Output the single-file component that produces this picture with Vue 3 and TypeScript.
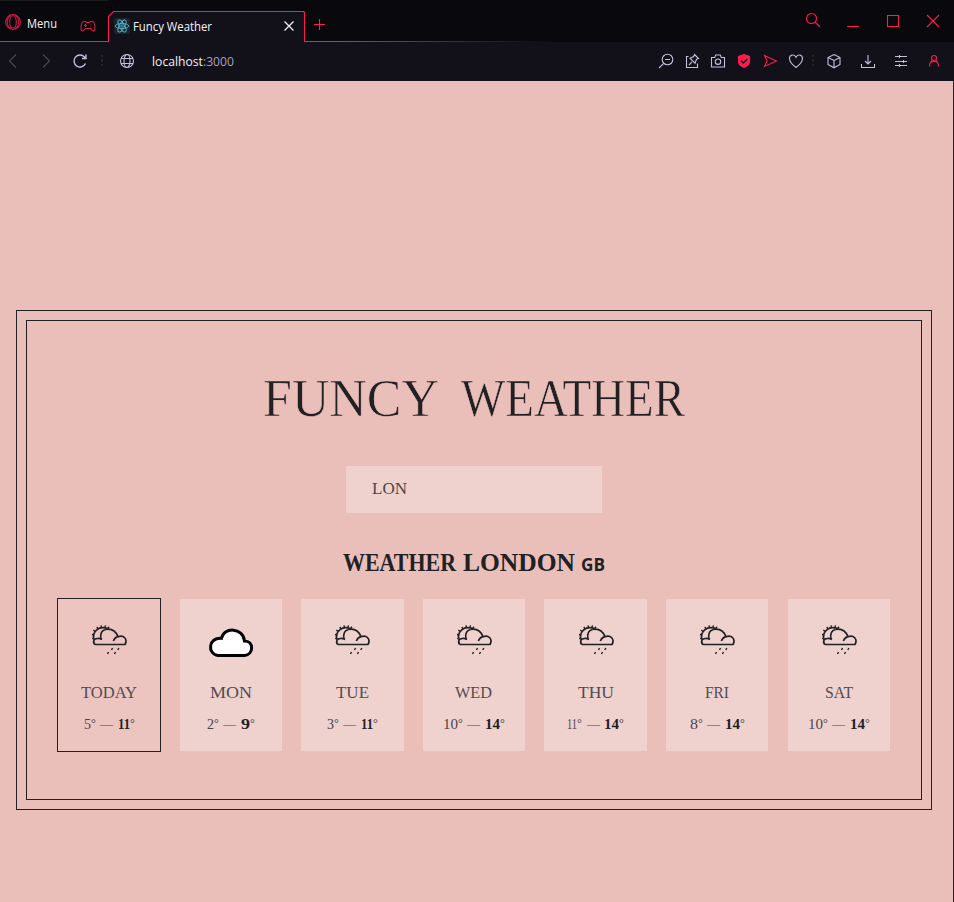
<script setup lang="ts">
import { ref } from 'vue'

interface Day {
  name: string
  nameWidth: number
  sky: 'rain' | 'cloud'
  low: number
  lowWidth: number
  high: number
  highWidth: number
}

const query = ref('LON')

const days: Day[] = [
  { name: 'TODAY', nameWidth: 56, sky: 'rain', low: 5, lowWidth: 7, high: 11, highWidth: 12 },
  { name: 'MON', nameWidth: 42, sky: 'cloud', low: 2, lowWidth: 7, high: 9, highWidth: 9 },
  { name: 'TUE', nameWidth: 33, sky: 'rain', low: 3, lowWidth: 7, high: 11, highWidth: 12 },
  { name: 'WED', nameWidth: 37, sky: 'rain', low: 10, lowWidth: 15, high: 14, highWidth: 15 },
  { name: 'THU', nameWidth: 36, sky: 'rain', low: 11, lowWidth: 10, high: 14, highWidth: 15 },
  { name: 'FRI', nameWidth: 24, sky: 'rain', low: 8, lowWidth: 8, high: 14, highWidth: 15 },
  { name: 'SAT', nameWidth: 28, sky: 'rain', low: 10, lowWidth: 15, high: 14, highWidth: 15 },
]
</script>

<template>
  <div class="window">
    <header class="titlebar">
      <div class="menu">
        <svg class="opera" width="16" height="16" viewBox="0 0 16 16">
          <circle cx="8" cy="8" r="7.4" />
          <ellipse cx="8" cy="8" rx="3.3" ry="6.2" />
          <path d="M6 1.5C1 4 1 12 6 14.5M10 1.5C15 4 15 12 10 14.5" />
        </svg>
        <svg class="menu-label" width="31" height="20">
          <text x="0" y="15" textLength="30" lengthAdjust="spacingAndGlyphs">Menu</text>
        </svg>
        <svg class="pad" width="16" height="14" viewBox="0 0 16 14">
          <path d="M3.500 1.500h2l1 1h3l1-1h2c2 0 2.400 4.500 2.400 7.700 0 2-2 2.200-3 .8L10.500 8.500h-5L4 10c-1 1.400-3 1.200-3-.8 0-3.200.5-7.700 2.500-7.700z" />
          <path d="M4 5.500h3M5.500 4v3M11 4.500v.8M11 6.500v.8" />
        </svg>
      </div>
      <div class="tab">
        <svg class="tab-edge" width="197" height="31" viewBox="0 0 197 31">
          <path d="M.5 31V5.500L5.500.5H195.500L196.500 1.500V31" />
        </svg>
        <svg class="react" width="16" height="16" viewBox="0 0 16 16">
          <rect width="16" height="16" rx="2" />
          <ellipse cx="8" cy="8" rx="6.7" ry="2.600" />
          <ellipse cx="8" cy="8" rx="6.7" ry="2.600" transform="rotate(60 8 8)" />
          <ellipse cx="8" cy="8" rx="6.7" ry="2.600" transform="rotate(120 8 8)" />
          <circle cx="8" cy="8" r="1.200" />
        </svg>
        <svg class="tab-title" width="80" height="20">
          <text x="0" y="15" textLength="79" lengthAdjust="spacingAndGlyphs">Funcy Weather</text>
        </svg>
        <svg class="tab-close" width="10" height="10" viewBox="0 0 10 10"><path d="M.5.5l9 9M9.500.5l-9 9" /></svg>
      </div>
      <div class="strip">
        <svg width="12" height="12" viewBox="0 0 12 12"><path d="M5.500 0v11M0 5.500h11" /></svg>
      </div>
      <div class="controls">
        <svg width="16" height="16" viewBox="0 0 16 16"><circle cx="6.500" cy="6.500" r="5" /><path d="M10 10l5 5" /></svg>
        <svg width="14" height="16" viewBox="0 0 14 16"><path d="M1 14.500h12" /></svg>
        <svg width="14" height="16" viewBox="0 0 14 16"><path d="M1.500 3.500h11v11h-11z" /></svg>
        <svg width="14" height="16" viewBox="0 0 14 16"><path d="M1 3l12 12M13 3L1 15" /></svg>
      </div>
    </header>

    <nav class="toolbar">
      <div class="history">
        <svg class="dim" width="16" height="16" viewBox="0 0 16 16"><path d="M11 1.500L4.500 8l6.500 6.500" /></svg>
        <svg class="dim" width="16" height="16" viewBox="0 0 16 16"><path d="M5 1.500L11.500 8 5 14.500" /></svg>
        <svg class="reload" width="16" height="16" viewBox="0 0 16 16"><path d="M13.500 10.500A6 6 0 1 1 12.500 4L14 5.500M14 1.500v4H10" /></svg>
      </div>
      <span class="dots"></span>
      <svg class="globe" width="16" height="16" viewBox="0 0 16 16">
        <circle cx="8" cy="8" r="6.500" /><ellipse cx="8" cy="8" rx="3" ry="6.500" /><path d="M2 5.500h12M2 10.500h12" />
      </svg>
      <svg class="address" width="84" height="20">
        <text x="0" y="15" textLength="82" lengthAdjust="spacingAndGlyphs">localhost<tspan class="port">:3000</tspan></text>
      </svg>
      <div class="tools">
        <svg width="16" height="16" viewBox="0 0 16 16"><circle cx="9.500" cy="6.500" r="5.300" /><path d="M5.700 10.300L1 15M7 6.500h5" /></svg>
        <svg width="16" height="16" viewBox="0 0 16 16"><path d="M4.500 3.500h-2v11h11V10.500M5 12l3-3.200M10.500 1.500l4 4-2 .7-1.500 4-5-5 3.700-1.700z" /></svg>
        <svg width="16" height="16" viewBox="0 0 16 16"><path d="M1.500 4.500h3.200l1-2.500h4.600l1 2.500h3.200v9.500h-13z" /><circle cx="8" cy="8.700" r="2.700" /></svg>
        <svg class="shield" width="16" height="16" viewBox="0 0 16 16"><path d="M8 1.500l5.500 1.800v5.200c0 3-2.300 4.800-5.500 6-3.200-1.200-5.500-3-5.500-6V3.300z" /><path class="tick" d="M5 7.700l2.300 2.300L11.300 6" /></svg>
        <svg class="accent" width="16" height="16" viewBox="0 0 16 16"><path d="M2.500 2.500L14.500 8l-12 5.500L5 8z" /></svg>
        <svg width="16" height="16" viewBox="0 0 16 16"><path d="M8 14.500C4 11.500 1.500 8.700 1.500 5.500 1.500 1.500 6.500.8 8 4.200 9.500.8 14.500 1.500 14.500 5.500c0 3.200-2.500 6-6.500 9z" /></svg>
      </div>
      <span class="dots"></span>
      <div class="panels">
        <svg width="16" height="16" viewBox="0 0 16 16"><path d="M8 1.500l6 3v7l-6 3.300-6-3.300v-7zM2 4.500l6 3 6-3M8 7.500v7" /></svg>
        <svg width="16" height="16" viewBox="0 0 16 16"><path d="M8 2v8.500M5 8l3 3 3-3M1.500 11v3.500h13V11" /></svg>
        <svg width="16" height="16" viewBox="0 0 16 16"><path d="M2 3.500h12M2 8.500h12M2 12.500h12M6.500 2v3M10.500 7v3M6.500 11v3" /></svg>
        <svg class="accent" width="16" height="16" viewBox="0 0 16 16"><circle cx="8" cy="5" r="2.500" /><path d="M3.500 13.500v-1c0-2.500 2-4 4.500-4s4.500 1.500 4.500 4v1M6 7.500L4.500 9M10 7.500L11.500 9" /></svg>
      </div>
    </nav>

    <main class="page">
      <section class="frame">
        <div class="panel">
          <h1 class="title">
            <svg width="424" height="70">
              <text x="1" y="50" textLength="176" lengthAdjust="spacingAndGlyphs">FUNCY</text>
              <text x="199" y="50" textLength="224" lengthAdjust="spacingAndGlyphs">WEATHER</text>
            </svg>
          </h1>

          <input v-model="query" class="search" type="text" />

          <h2 class="place">
            <svg width="264" height="40">
              <text x="1" y="31" textLength="113" lengthAdjust="spacingAndGlyphs">WEATHER</text>
              <text x="121" y="31" textLength="112" lengthAdjust="spacingAndGlyphs">LONDON</text>
              <text class="country" x="239" y="31" textLength="24" lengthAdjust="spacingAndGlyphs">GB</text>
            </svg>
          </h2>

          <div class="days">
            <article v-for="(day, i) in days" :key="day.name" class="day" :class="{ today: i === 0 }">
              <div class="sky">
                <svg v-if="day.sky === 'rain'" class="rain" width="35" height="31" viewBox="0 0 35 31">
                  <path class="rays" d="M.2 13.500H2M0 9.500L2 10M1.300 5.200L3.300 6.500M4.800 2L6 3.800M9 .3L9.400 2.300M13.500.3L13 2.400M17 1.800L15.700 3.500" />
                  <path d="M2 14.500C-.3 6.500 7 .3 16 3.800M13.500 4.500C9.500 5.500 8 9 9 14" />
                  <path d="M3 19.500H33C36 14 31.500 9.500 26 11.700 23.500 5.500 18.500 3.500 13.500 4.500M10 14.500C7 12.700 3.200 13.500 2 15 1.300 17 1.500 18.500 3 19.500M26 11.700C23.500 12.300 22.200 14 21.300 16" />
                  <path class="drops" d="M20.500 23l-1 2M26.800 23l-1 2M16.500 27l-1 2M23.500 27l-1 2" />
                </svg>
                <svg v-else class="cloud" width="44" height="28" viewBox="0 0 44 28">
                  <path d="M9 26.500H35.500C45 25.500 45 12 35.500 12 34-1.500 15-2.500 12.500 9.300-.8 8-2 25 9 26.500z" />
                </svg>
              </div>
              <svg class="name" :width="day.nameWidth" height="20">
                <text x="0" y="15" :textLength="day.nameWidth" lengthAdjust="spacingAndGlyphs">{{ day.name }}</text>
              </svg>
              <div class="temps">
                <svg :width="day.lowWidth" height="20">
                  <text x="0" y="14" :textLength="day.lowWidth" lengthAdjust="spacingAndGlyphs">{{ day.low }}</text>
                </svg>
                <svg class="degree" width="5" height="20"><text x="0" y="12">°</text></svg>
                <svg class="dash" width="13" height="20"><text x="0" y="14" textLength="13" lengthAdjust="spacingAndGlyphs">—</text></svg>
                <svg class="high" :width="day.highWidth" height="20">
                  <text x="0" y="14" :textLength="day.highWidth" lengthAdjust="spacingAndGlyphs">{{ day.high }}</text>
                </svg>
                <svg class="degree" width="5" height="20"><text x="0" y="12">°</text></svg>
              </div>
            </article>
          </div>
        </div>
      </section>
    </main>
  </div>
</template>

<style>
body {
  margin: 0;
  background: #eabeb9;
}
</style>

<style scoped>
.window {
  box-sizing: border-box;
  width: 954px;
  height: 902px;
  overflow: hidden;
  display: flex;
  flex-direction: column;
  font-family: 'Liberation Serif', serif;
  color: #212124;
}
svg {
  display: block;
  flex: none;
  overflow: visible;
}
.titlebar svg,
.toolbar svg {
  fill: none;
  stroke-width: 1.1;
}
.titlebar {
  height: 42px;
  display: flex;
  background: #09080c;
  stroke: #fa1e4e;
}
.menu {
  box-sizing: border-box;
  width: 108px;
  height: 42px;
  display: flex;
  align-items: center;
  padding: 3px 0 0 5px;
  border-bottom: 1px solid #fa1e4e;
  background: linear-gradient(#1b1b1c, #1b1b1c) 0 0 / 115px 1px no-repeat;
}
.opera {
  stroke: #c91c43;
}
.menu-label {
  margin: 1px 22px 0 6px;
}
.menu-label text {
  font: 13px 'Open Sans', sans-serif;
  fill: #f5f5f7;
  stroke: none;
}
.pad {
  margin-top: 9px;
  stroke: #d91d48;
}
.tab {
  position: relative;
  box-sizing: border-box;
  width: 197px;
  height: 31px;
  margin-top: 11px;
  display: flex;
  align-items: center;
  padding-left: 6px;
  background: linear-gradient(135deg, transparent 4px, #121019 4px);
}
.tab-edge {
  position: absolute;
  left: 0;
  top: 0;
}
.react {
  margin-top: -2px;
  stroke: #50b4cf;
}
.titlebar .react {
  stroke-width: 0.9;
}
.react rect {
  fill: #20232a;
  stroke: none;
}
.tab-title {
  margin: -2px 0 0 3px;
}
.tab-title text {
  font: 13px 'Open Sans', sans-serif;
  fill: #f5f5f7;
  stroke: none;
}
.tab-close {
  margin: -1px 0 0 71px;
  stroke: #f0f0f3;
}
.titlebar .tab-close {
  stroke-width: 1.3;
}
.strip {
  box-sizing: border-box;
  flex: 1;
  height: 42px;
  padding: 19px 0 0 9px;
  border-bottom: 1px solid;
  border-image: linear-gradient(90deg, #fa1e4e 6%, #09080c 51%) 0 0 1 0;
}
.controls {
  display: grid;
  grid-template-columns: repeat(4, 40px);
  justify-items: center;
  padding: 12px 1px 0 0;
}
.toolbar {
  box-sizing: border-box;
  height: 39px;
  padding-bottom: 2px;
  display: flex;
  align-items: center;
  background: #121019;
  stroke: #c5bedb;
}
.history {
  width: 96px;
  display: grid;
  grid-template-columns: 33px 33px 30px;
  padding-left: 5px;
}
.dim {
  stroke: #4a4656;
}
.toolbar .reload {
  margin-left: 1px;
  stroke-width: 1.4;
}
.dots {
  width: 2px;
  height: 11px;
  background: repeating-linear-gradient(#252332 0 2px, transparent 2px 4.500px);
}
.globe {
  margin-left: 16px;
}
.address {
  margin-left: 17px;
}
.address text {
  font: 13px 'Open Sans', sans-serif;
  fill: #f3f1f7;
  stroke: none;
}
.address .port {
  fill: #a7a0b8;
}
.tools {
  display: grid;
  grid-template-columns: repeat(6, 26px);
  justify-items: center;
  margin-left: auto;
  margin-right: 3px;
}
.panels {
  display: grid;
  grid-template-columns: repeat(4, 33.300px);
  justify-items: center;
  margin-left: 4px;
  margin-right: 3px;
}
.accent {
  stroke: #f61e4d;
}
.shield {
  stroke: #fa1e4e;
}
.shield path:first-child {
  fill: #fa1e4e;
}
.shield .tick {
  stroke: #121019;
  stroke-width: 1.5;
}
.page {
  box-sizing: border-box;
  flex: 1;
  padding: 229px 0 0 16px;
  background: #eabeb9;
  border-right: 1px solid #2a2023;
}
.frame {
  box-sizing: border-box;
  width: 916px;
  height: 500px;
  padding: 9px;
  border: 1px solid #212124;
}
.panel {
  box-sizing: border-box;
  height: 480px;
  padding: 45px 31px 0;
  border: 1px solid #212124;
  display: flex;
  flex-direction: column;
  align-items: center;
}
.title {
  margin: 0;
  font-size: 52px;
  font-weight: 400;
}
.title text,
.place text {
  fill: #212124;
}
.title text {
  stroke: #eabeb9;
  stroke-width: 0.6;
}
.search {
  box-sizing: border-box;
  width: 256px;
  height: 47px;
  margin: 30px 0 27px;
  padding: 0 26px 2px;
  border: 0;
  outline: 0;
  background: #efd2cd;
  font: 17px 'Liberation Serif', serif;
  color: #4a434b;
}
.place {
  margin: 0 0 19px;
  font-size: 25px;
  font-weight: 700;
}
.country {
  font: 700 17.500px 'Open Sans', sans-serif;
}
.days {
  align-self: stretch;
  display: grid;
  grid-template-columns: repeat(7, 1fr);
  gap: 19.200px;
}
.day {
  height: 152px;
  display: flex;
  flex-direction: column;
  align-items: center;
  background: #efd2cd;
}
.today {
  background: #ecc5c0;
  outline: 1px solid #212124;
}
.sky {
  height: 84px;
}
.rain {
  margin: 26px 0 0 1px;
  fill: none;
  stroke: #212124;
  stroke-width: 1.7;
}
.rays,
.drops {
  stroke-width: 1.4;
}
.cloud {
  margin-top: 30px;
  fill: #fff;
  stroke: #000;
  stroke-width: 3;
}
.name {
  font-size: 17px;
  fill: #524a54;
}
.temps {
  display: flex;
  margin-top: 12px;
  font-size: 15px;
  fill: #4a434c;
}
.dash {
  margin: 0 4.500px;
}
.degree {
  font-size: 12px;
}
.high {
  font-weight: 700;
  fill: #212124;
}
</style>
